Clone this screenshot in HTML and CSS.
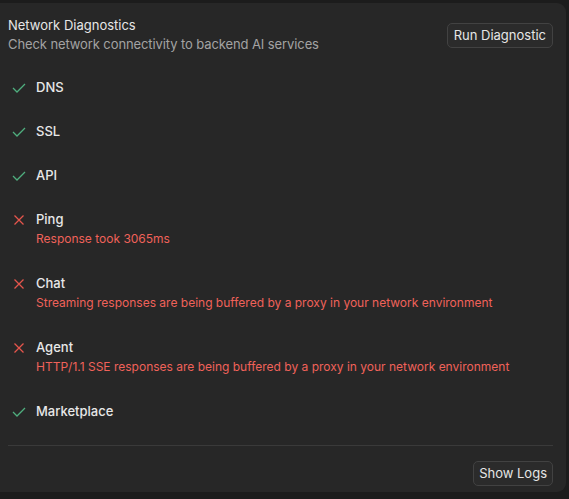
FILE: index.html
```html
<!DOCTYPE html>
<html>
<head>
<meta charset="utf-8">
<link rel="stylesheet" href="styles.css">
</head>
<body>
<div class="panel">
  <div class="header">
    <div class="heading">
      <div class="title">Network Diagnostics</div>
      <div class="subtitle">Check network connectivity to backend AI services</div>
    </div>
    <button class="btn">Run Diagnostic</button>
  </div>
  <div class="list">
    <div class="row">
      <svg class="icon" viewBox="0 0 14 10"><polyline class="ok" points="1,5 5,9 13,1"/></svg>
      <div class="body"><div class="name">DNS</div></div>
    </div>
    <div class="row">
      <svg class="icon" viewBox="0 0 14 10"><polyline class="ok" points="1,5 5,9 13,1"/></svg>
      <div class="body"><div class="name">SSL</div></div>
    </div>
    <div class="row">
      <svg class="icon" viewBox="0 0 14 10"><polyline class="ok" points="1,5 5,9 13,1"/></svg>
      <div class="body"><div class="name">API</div></div>
    </div>
    <div class="row">
      <svg class="icon" viewBox="0 0 14 10"><path class="bad" d="M2.5 0.5 L11.5 9.5 M11.5 0.5 L2.5 9.5"/></svg>
      <div class="body"><div class="name">Ping</div><div class="err">Response took 3065ms</div></div>
    </div>
    <div class="row">
      <svg class="icon" viewBox="0 0 14 10"><path class="bad" d="M2.5 0.5 L11.5 9.5 M11.5 0.5 L2.5 9.5"/></svg>
      <div class="body"><div class="name">Chat</div><div class="err">Streaming responses are being buffered by a proxy in your network environment</div></div>
    </div>
    <div class="row">
      <svg class="icon" viewBox="0 0 14 10"><path class="bad" d="M2.5 0.5 L11.5 9.5 M11.5 0.5 L2.5 9.5"/></svg>
      <div class="body"><div class="name">Agent</div><div class="err">HTTP/1.1 SSE responses are being buffered by a proxy in your network environment</div></div>
    </div>
    <div class="row">
      <svg class="icon" viewBox="0 0 14 10"><polyline class="ok" points="1,5 5,9 13,1"/></svg>
      <div class="body"><div class="name">Marketplace</div></div>
    </div>
  </div>
  <div class="divider"></div>
  <div class="footer">
    <button class="btn logs">Show Logs</button>
  </div>
</div>
</body>
</html>
```

FILE: styles.css
```css
html, body {
  margin: 0;
  padding: 0;
  background: #1c1c1c;
  font-family: Inter, "Noto Sans", sans-serif;
  font-size: 13px;
  color: #e4e4e4;
}

.panel {
  margin-top: 3px;
  width: 566px;
  height: 489px;
  box-sizing: border-box;
  background: #272727;
  border-radius: 0 9px 9px 0;
  padding: 13px 13px 0 8px;
}

.header {
  display: flex;
  align-items: center;
  justify-content: space-between;
}

.title {
  line-height: 19px;
  color: #e6e6e6;
}

.subtitle {
  line-height: 19px;
  color: #a3a3a3;
  letter-spacing: -0.1px;
}

.btn {
  font-family: inherit;
  font-size: 13px;
  color: #e6e6e6;
  background: #2b2b2b;
  border: 1px solid #424242;
  border-radius: 5px;
  height: 25px;
  padding: 0 6px;
  line-height: 23px;
}

.logs {
  padding: 0 5px;
}

.list {
  margin-top: 11px;
}

.row {
  display: flex;
  align-items: flex-start;
  padding: 12px 0 12px 4px;
}

.icon {
  width: 14px;
  height: 10px;
  margin-top: 6px;
  margin-right: 10px;
  flex: none;
  fill: none;
}

.ok {
  stroke: #4fae7e;
  stroke-width: 1.3;
}

.bad {
  stroke: #e5554c;
  stroke-width: 1.3;
}

.name {
  line-height: 20px;
  font-weight: 500;
  color: #e8e8e8;
}

.err {
  font-size: 12px;
  line-height: 20px;
  color: #f0625a;
}

.divider {
  margin-top: 12px;
  height: 1px;
  background: #3a3a3a;
}

.footer {
  display: flex;
  justify-content: flex-end;
  margin-top: 15px;
}
```
